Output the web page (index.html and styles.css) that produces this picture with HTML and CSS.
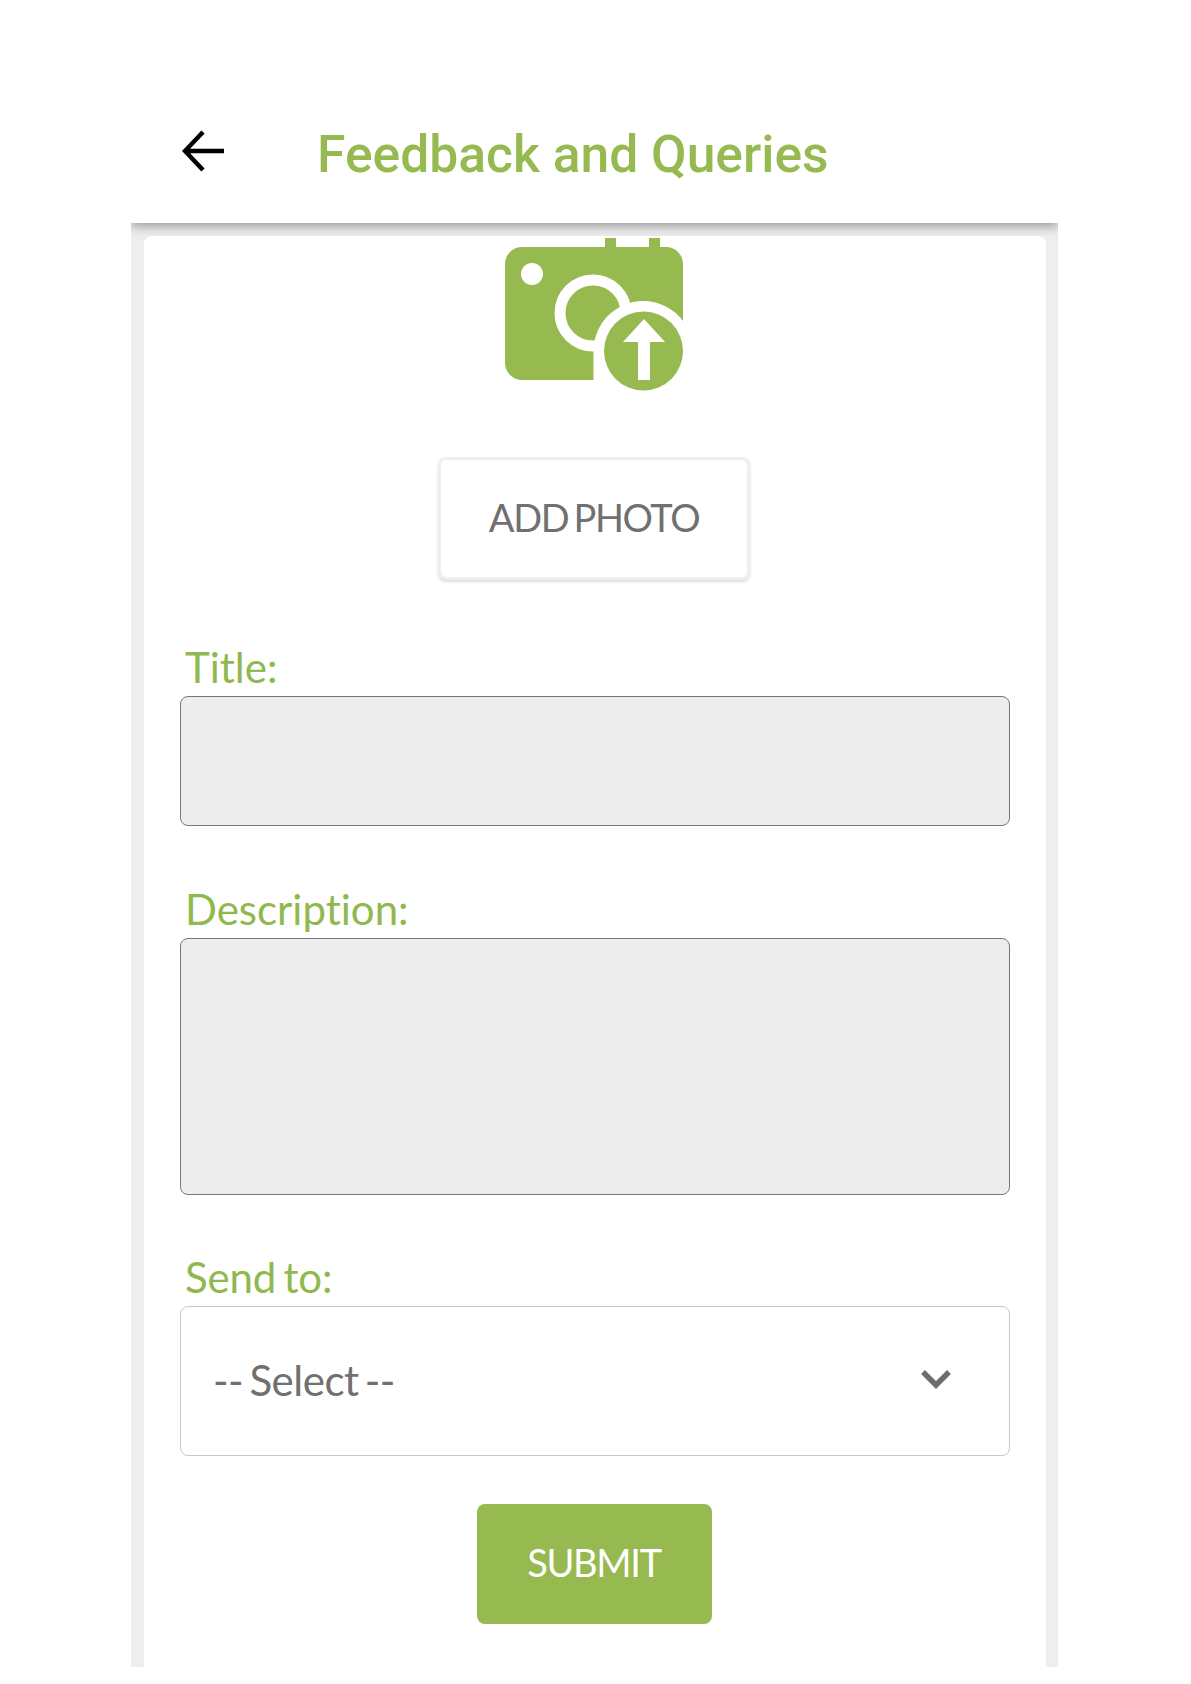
FILE: index.html
```html
<!DOCTYPE html>
<html lang="en">
<head>
  <meta charset="UTF-8" />
  <meta name="viewport" content="width=device-width, initial-scale=1.0"/>
  <title>Feedback and Queries</title>
  <link rel="stylesheet" href="styles.css">
</head>
<body>
  <div class="screen">
    <header class="topbar">
      <button class="back" aria-label="Back">
        <svg viewBox="0 0 42 42" width="42" height="42">
          <path d="M42 21H4M21 2 3 21 21 40" fill="none" stroke="#000" stroke-width="4.500"/>
        </svg>
      </button>
      <h1 class="title">Feedback and Queries</h1>
    </header>

    <main class="card">
      <svg class="camera" viewBox="0 0 178 153" width="178" height="153">
        <path d="M100 0h11v12h-11zM144 0h11v12h-11z" fill="#97ba50"/>
        <rect x="0" y="9" width="178" height="133" rx="17" fill="#97ba50"/>
        <circle cx="27" cy="36" r="11" fill="#fff"/>
        <circle cx="88" cy="75" r="33" fill="none" stroke="#fff" stroke-width="11"/>
        <path d="M138 63a50 50 0 0 1 40 20v70H88.500V113a50 50 0 0 1 49.500-50z" fill="#fff"/>
        <circle cx="138.500" cy="113" r="39.500" fill="#97ba50"/>
        <path d="M139 81 160 104H145V142H133V104H118z" fill="#fff"/>
      </svg>

      <button class="add-photo">ADD PHOTO</button>

      <form class="form">
        <label class="field-label label-title" for="title">Title:</label>
        <input class="box box-title" id="title" type="text" />

        <label class="field-label label-desc" for="desc">Description:</label>
        <textarea class="box box-desc" id="desc"></textarea>

        <label class="field-label label-send">Send to:</label>
        <div class="select">
          <span>-- Select --</span>
          <svg class="chevron" viewBox="0 0 32 20" width="32" height="20">
            <path d="M3 3 16 16 29 3" fill="none" stroke="#6d6d6d" stroke-width="5.500"/>
          </svg>
        </div>

        <button class="submit" type="button">SUBMIT</button>
      </form>
    </main>
  </div>
</body>
</html>
```

FILE: styles.css
```css
html, body {
  margin: 0;
  padding: 0;
  background: #fff;
  font-family: "Lato", sans-serif;
  font-variant-ligatures: none;
}

.screen {
  width: 927px;
  height: 1667px;
  margin-left: 131px;
  background: #eee;
  overflow: hidden;
}

.topbar {
  position: relative;
  display: flex;
  align-items: center;
  height: 223px;
  padding: 82px 0 0 51px;
  box-sizing: border-box;
  background: #fff;
  box-shadow: 0 3px 11px rgba(0, 0, 0, 0.38);
}

.back {
  display: flex;
  width: 42px;
  height: 42px;
  margin-top: -4px;
  padding: 0;
  border: none;
  background: none;
}

.title {
  margin: 4px 0 0 93px;
  font-family: "Roboto", sans-serif;
  font-size: 51.600px;
  font-weight: 500;
  color: #97ba50;
}

.card {
  position: relative;
  display: flex;
  flex-direction: column;
  align-items: center;
  height: 1500px;
  margin: 13px 12px 0 13px;
  background: #fff;
  border-radius: 8px 8px 0 0;
}

.camera {
  margin: 2px 2px 0 0;
}

.add-photo {
  width: 312px;
  height: 123px;
  margin: 66px 2px 0 0;
  padding-bottom: 5px;
  background: #fff;
  border: 3px solid #efefef;
  border-radius: 8px;
  box-shadow: 0 2px 3px rgba(0, 0, 0, 0.14);
  font-family: "Lato", sans-serif;
  font-size: 38px;
  letter-spacing: -1.400px;
  word-spacing: -3px;
  color: #707070;
}

.form {
  display: flex;
  flex-direction: column;
  align-self: stretch;
  padding: 0 36px;
}

.field-label {
  margin-left: 5px;
  margin-bottom: 4px;
  font-size: 42px;
  line-height: 50px;
  color: #8fb84e;
}

.label-title { margin-top: 62px; }
.label-desc { margin-top: 58px; }

.label-send {
  margin-top: 57px;
  letter-spacing: -0.200px;
  word-spacing: -3px;
}

.box {
  display: block;
  box-sizing: border-box;
  width: 100%;
  margin: 0;
  background: #ededed;
  border: 1px solid #777;
  border-radius: 8px;
  resize: none;
}

.box-title { height: 130px; }
.box-desc { height: 257px; }

.select {
  display: flex;
  align-items: center;
  justify-content: space-between;
  box-sizing: border-box;
  height: 150px;
  padding: 0 57px 2px 32px;
  border: 1px solid #c8c8c8;
  border-radius: 8px;
  font-size: 42px;
  letter-spacing: -0.500px;
  word-spacing: -4px;
  color: #707070;
}

.chevron {
  margin-bottom: 2px;
}

.submit {
  align-self: center;
  width: 235px;
  height: 120px;
  margin: 48px 2px 0 0;
  padding-bottom: 5px;
  background: #97ba50;
  border: none;
  border-radius: 8px;
  font-family: "Lato", sans-serif;
  font-size: 38px;
  letter-spacing: -1.300px;
  color: #fff;
}
```
